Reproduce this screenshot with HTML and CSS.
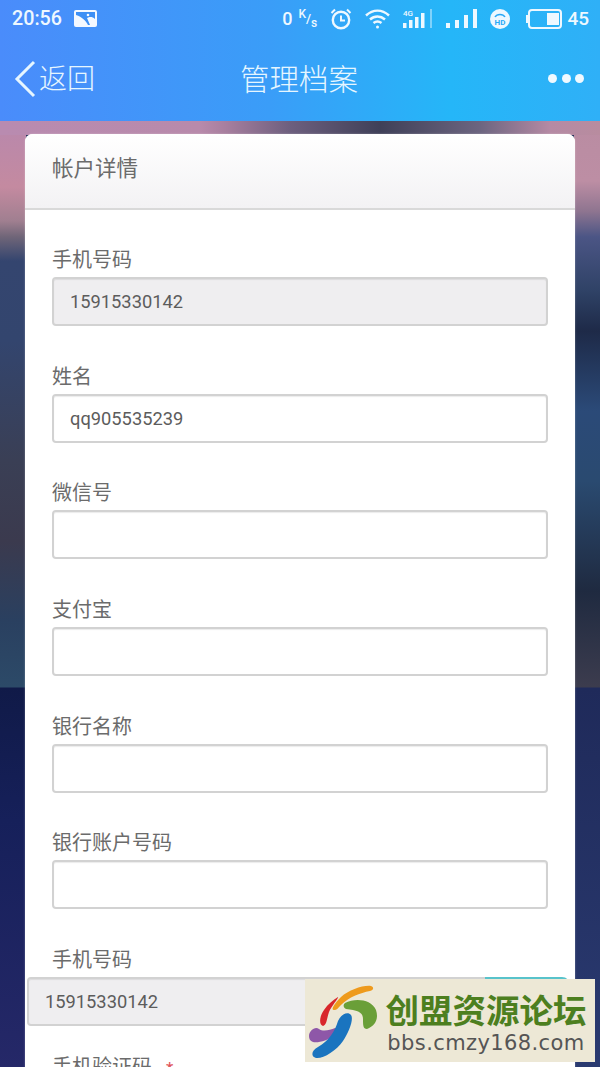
FILE: index.html
```html
<!DOCTYPE html>
<html lang="zh-CN">
<head>
    <meta charset="UTF-8">
    <meta name="viewport" content="width=device-width, initial-scale=1.0">
    <title>管理档案</title>
    <link rel="stylesheet" href="styles.css">
</head>
<body>
<div class="page">
    <header class="topbar">
        <div class="status">
            <div class="status-left">
                <span class="clock">20:56</span>
                <svg class="ic-photo" width="23" height="17" viewBox="0 0 23 17">
                    <rect x="0" y="0" width="23" height="17" rx="2" fill="#f4f8ff"/>
                    <path d="M2 2 H21 V9 C18 6 15 7 13 8 L16 15 L14 15 C12 11 8 7 2 5 Z" fill="#3d8ff5"/>
                    <circle cx="14" cy="5" r="1.300" fill="#f4f8ff"/>
                </svg>
            </div>
            <div class="status-right">
                <span class="speed"><span class="speed-num">0</span><span class="speed-unit"><sup>K</sup>/<sub>s</sub></span></span>
                <svg width="22" height="22" viewBox="0 0 22 22" fill="none" stroke="#eef8ff">
                    <circle cx="11" cy="12" r="8.200" stroke-width="2.400"/>
                    <path d="M11 7.500 V12.500 H15" stroke-width="2"/>
                    <path d="M1.500 5 L5 1.500 M20.500 5 L17 1.500" stroke-width="2"/>
                </svg>
                <svg width="25" height="20" viewBox="0 0 25 20" fill="none" stroke="#eef8ff" stroke-width="2.400">
                    <path d="M1 6.500 C8 0 17 0 24 6.500"/>
                    <path d="M5 10.500 C9.500 6.500 15.500 6.500 20 10.500"/>
                    <path d="M8.500 14 C11 12 14 12 16.500 14"/>
                    <circle cx="12.500" cy="18" r="1.500" fill="#eef8ff" stroke="none"/>
                </svg>
                <svg width="30" height="22" viewBox="0 0 30 22" fill="#eef8ff">
                    <text class="net" x="0" y="8">4G</text>
                    <rect x="0" y="15" width="3.500" height="5"/>
                    <rect x="6" y="12" width="3.500" height="8"/>
                    <rect x="12" y="9" width="3.500" height="11"/>
                    <rect x="18" y="5" width="3.500" height="15"/>
                    <rect x="27" y="1" width="2" height="19" opacity=".45"/>
                </svg>
                <svg width="31" height="20" viewBox="0 0 31 20" fill="#eef8ff">
                    <rect x="0" y="14" width="4" height="5"/>
                    <rect x="9" y="11" width="4" height="8"/>
                    <rect x="18" y="6" width="4" height="13"/>
                    <rect x="27" y="0" width="4" height="19"/>
                </svg>
                <svg width="20" height="20" viewBox="0 0 20 20">
                    <circle cx="10" cy="10" r="10" fill="#eef8ff"/>
                    <path d="M5 8 C7 4.500 13 4.500 15 8" fill="none" stroke="#2aa8f6" stroke-width="1.500"/>
                    <text class="hd" x="10" y="15.500" text-anchor="middle">HD</text>
                </svg>
                <svg class="ic-batt" width="36" height="20" viewBox="0 0 36 20" fill="none">
                    <rect x="3" y="1" width="32" height="18" rx="3" stroke="#eef8ff" stroke-width="2"/>
                    <rect x="0" y="6" width="2" height="8" fill="#eef8ff"/>
                    <rect x="21" y="4" width="12" height="12" fill="#eef8ff"/>
                </svg>
                <span class="batt-num">45</span>
            </div>
        </div>
        <nav class="nav">
            <a class="back">
                <svg width="22" height="38" viewBox="0 0 22 38" fill="none" stroke="#e6f6ff" stroke-width="3">
                    <path d="M20 2 L3 19 L20 36"/>
                </svg>
                <span>返回</span>
            </a>
            <h1 class="nav-title">管理档案</h1>
            <div class="more"><i></i><i></i><i></i></div>
        </nav>
    </header>

    <main class="content">
        <section class="card">
            <div class="card-head">帐户详情</div>
            <div class="card-body">
                <div class="field">
                    <label>手机号码</label>
                    <div class="input disabled">15915330142</div>
                </div>
                <div class="field">
                    <label>姓名</label>
                    <div class="input">qq905535239</div>
                </div>
                <div class="field">
                    <label>微信号</label>
                    <div class="input"></div>
                </div>
                <div class="field">
                    <label>支付宝</label>
                    <div class="input"></div>
                </div>
                <div class="field">
                    <label>银行名称</label>
                    <div class="input"></div>
                </div>
                <div class="field">
                    <label>银行账户号码</label>
                    <div class="input"></div>
                </div>
                <div class="field field-code">
                    <label>手机号码</label>
                    <div class="input-group">
                        <div class="input disabled">15915330142</div>
                        <button class="send"></button>
                    </div>
                </div>
                <div class="field">
                    <label>手机验证码 <em>*</em></label>
                </div>
            </div>
        </section>
    </main>

    <!-- 水印 -->
    <div class="watermark">
        <svg class="wm-logo" width="80" height="83" viewBox="0 0 80 83" fill="none" stroke-linecap="round">
            <path d="M29 31 C25 31 30 24 36 18 C44 11 58 6 66 7 C69 8 69 11 65 12 C55 14 44 18 36 26 C33 29 32 31 29 31 Z" fill="#ee9a1c"/>
            <path d="M18 47 C14 46 14 38 19 31 C23 25 28 21 33 18 C34 19 27 26 24 33 C22 38 22 46 18 47 Z" fill="#d8262b"/>
            <path d="M40 24 C50 19 66 20 71 31 C74 40 70 47 62 50 C58 50 58 46 58 40 C58 33 52 31 41 30 C38 28 38 26 40 24 Z" fill="#6a9f38"/>
            <path d="M4 57 C4 52 10 47 14 50 C18 53 25 51 30 49 C33 49 32 53 29 56 C23 62 13 64 8 63 C5 62 4 60 4 57 Z" fill="#8e57a8"/>
            <path d="M11 79 C5 77 7 71 13 68 C24 62 30 52 33 42 C36 35 43 32 46 36 C49 40 44 53 38 62 C31 72 18 80 11 79 Z" fill="#1a74bf"/>
        </svg>
        <div class="wm-text">
            <div class="wm-name">创盟资源论坛</div>
            <div class="wm-url">bbs.cmzy168.com</div>
        </div>
    </div>
</div>
</body>
</html>
```
FILE: styles.css
```css
* {
    box-sizing: border-box;
}

body {
    margin: 0;
    font-family: Roboto, "Noto Sans CJK SC", sans-serif;
    color: #666;
}

.page {
    position: relative;
    width: 600px;
    height: 1067px;
    overflow: hidden;
    background-color: #1f2a55;
    background-image:
        linear-gradient(90deg, #b98bb0 0, #b88aab 200px, #a87f9f 225px, #6d5f7e 290px, #3f4058 380px, #6c6580 480px, #b58aa4 550px, #b88c9f 600px),
        linear-gradient(180deg, #b888ad 0, #c48aa0 66px, #a07f90 100px, #6f6578 116px, #34456f 140px, #33456e 220px, #3a3f55 340px, #3b3a4e 420px, #2a4060 500px, #2c4a68 566px, #101a48 567px, #16205a 700px, #252868 946px),
        linear-gradient(180deg, #b98ca2 0, #bd8ea4 60px, #8f7590 90px, #4b5585 116px, #2f4266 170px, #1e2a48 210px, #2b4a78 290px, #2a4a70 360px, #1f2a40 470px, #3c3c4e 566px, #1f2a5a 567px, #2a3a70 946px);
    background-repeat: no-repeat;
    background-size: 600px 14px, 26px 946px, 26px 946px;
    background-position: 0 121px, 0 121px, 574px 121px;
}

.topbar {
    height: 121px;
    background: linear-gradient(90deg, #4a8cfb 0%, #3a9df8 45%, #25b6f8 75%, #2fb0f7 100%);
    color: #eef8ff;
}

/* barra de estado */
.status {
    display: flex;
    justify-content: space-between;
    align-items: center;
    height: 36px;
    padding: 1px 11px 0 12px;
}

.status-left,
.status-right {
    display: flex;
    align-items: center;
}

.status-right {
    gap: 13px;
}

.clock {
    font-size: 19.700px;
    font-weight: 500;
}

.ic-photo {
    margin-left: 12px;
}

.speed {
    display: flex;
    align-items: center;
    font-weight: 500;
}

.speed-num {
    font-size: 18px;
    margin-right: 6px;
}

.speed-unit {
    font-size: 13px;
    width: 19px;
    line-height: 20px;
}

.speed-unit sup,
.speed-unit sub {
    font-size: 12px;
    line-height: 0;
}

.net {
    font: 500 8px Roboto, sans-serif;
}

.hd {
    font: 700 8px Roboto, sans-serif;
    fill: #2aa8f6;
}

.ic-batt {
    margin-left: 3px;
}

.batt-num {
    font-size: 19px;
    font-weight: 500;
    margin-left: -8px;
}

/* navegacion */
.nav {
    display: grid;
    grid-template-columns: 1fr auto 1fr;
    align-items: center;
    height: 85px;
    padding: 0 16px 0 14px;
    color: #e6f6ff;
}

.back {
    display: flex;
    align-items: center;
    gap: 3px;
    font-size: 28px;
    font-weight: 300;
}

.back span {
    margin-bottom: 4px;
}

.nav-title {
    margin: 0 0 4px;
    font-size: 29.500px;
    font-weight: 300;
}

.more {
    display: flex;
    justify-content: flex-end;
    gap: 4.500px;
}

.more i {
    width: 9px;
    height: 9px;
    border-radius: 50%;
    background: #f0f9ff;
}

/* tarjeta */
.content {
    padding: 13px 25px 0;
}

.card {
    border-radius: 8px 8px 0 0;
    background: #fff;
    box-shadow: 0 0 2px rgba(255, 255, 255, .4);
}

.card-head {
    display: flex;
    align-items: center;
    height: 76px;
    padding: 0 27px 10px;
    font-size: 21.500px;
    color: #6b6b6b;
    background: linear-gradient(180deg, #fff 0%, #f3f2f4 100%);
    border-bottom: 2px solid #d9d9d9;
    border-radius: 8px 8px 0 0;
}

.card-body {
    padding: 37px 27px 0;
}

.field {
    margin-bottom: 37.670px;
}

.field-code {
    margin-bottom: 28px;
}

.field label {
    display: block;
    height: 24px;
    margin-bottom: 6px;
    font-size: 20px;
    line-height: 26px;
    color: #6b6b6b;
}

.field em {
    margin-left: 9px;
    font-size: 17px;
    color: #e0525a;
    font-style: normal;
}

.input {
    display: flex;
    align-items: center;
    height: 49px;
    padding: 0 16px;
    font-size: 18.300px;
    color: #5c5c5c;
    background: #fff;
    border: 2px solid #d2d2d2;
    border-radius: 4px;
    box-shadow: inset 0 1px 1px rgba(0, 0, 0, .08);
}

.input.disabled {
    background: #efeef0;
}

.input-group {
    display: flex;
    margin: 0 -22px 0 -25px;
}

.input-group .input {
    flex: 1;
    border-radius: 4px 0 0 4px;
}

.send {
    width: 85px;
    height: 49px;
    border: 0;
    border-radius: 0 8px 8px 0;
    background: #58c3cb;
}

/* watermark */
.watermark {
    position: absolute;
    left: 305px;
    top: 979px;
    width: 290px;
    height: 83px;
    display: flex;
    background: #ede8d6;
}

.wm-logo {
    flex: none;
}

.wm-text {
    display: flex;
    flex-direction: column;
    align-items: center;
    width: 202px;
    padding-top: 14px;
}

.wm-name {
    height: 38px;
    font-size: 33.500px;
    line-height: 38px;
    font-weight: 700;
    color: #4d7f1f;
    white-space: nowrap;
}

.wm-url {
    font-family: "DejaVu Sans", sans-serif;
    font-size: 21px;
    line-height: 24px;
    letter-spacing: .4px;
    color: #555;
    white-space: nowrap;
}
```
